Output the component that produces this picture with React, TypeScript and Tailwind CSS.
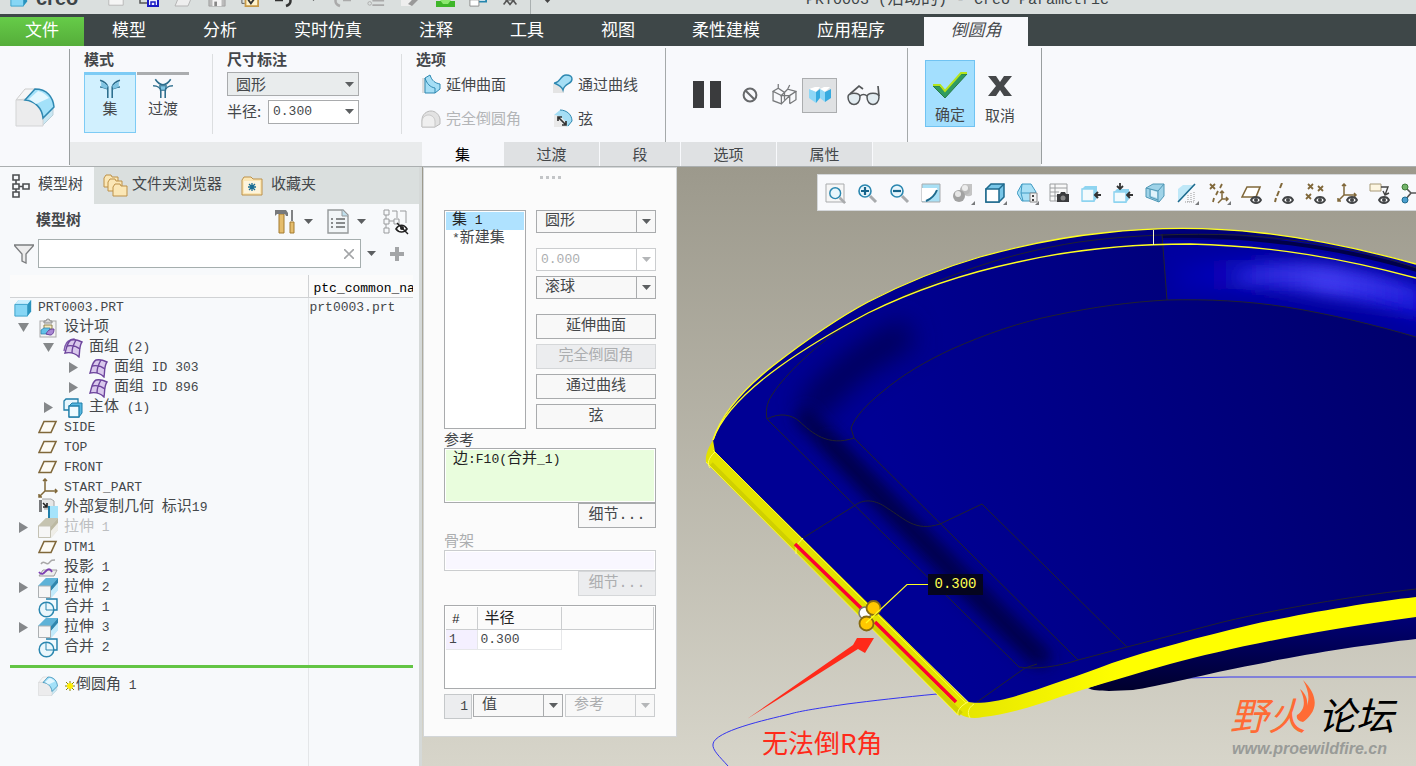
import { useState } from "react";
import type { ReactNode } from "react";
import clsx from "clsx";

interface IconProps {
  children: ReactNode;
  size?: number;
  box?: string;
}

const Icon = ({ children, size = 20, box = "0 0 20 20" }: IconProps) => (
  <svg width={size} height={size} viewBox={box} fill="none" className="shrink-0" aria-hidden="true">
    {children}
  </svg>
);

// Latin runs are set a little smaller than the Chinese around them so both keep the same rhythm
const Txt = ({ children, latin = "text-[13px]" }: { children: string; latin?: string }) => (
  <span className="whitespace-pre">
    {children.split(/([\x20-\x7e]+)/).map((part, i) =>
      i % 2 ? (
        <span key={i} className={latin}>{part}</span>
      ) : (
        part
      )
    )}
  </span>
);

const Caret = ({ className = "text-[#5c5f61]" }: { className?: string }) => (
  <svg width="9" height="5" viewBox="0 0 9 5" className={clsx("shrink-0", className)} aria-hidden="true">
    <path d="M0 0h9L4.500 5z" fill="currentColor" />
  </svg>
);

interface PickerProps {
  label: string;
  options: string[];
  className: string;
  split?: boolean;
  disabled?: boolean;
}

const Picker = ({ label, options, className, split, disabled }: PickerProps) => (
  <div className={clsx("relative", className)}>
    <select
      aria-label={label}
      disabled={disabled}
      className={clsx(
        "h-full w-full appearance-none border bg-transparent pr-5 opacity-100 outline-none",
        disabled ? "border-[#cbcdcf] text-[#acaeb0]" : "border-[#a9abad] text-[#44474a]",
        /^\d/.test(options[0]) ? "pl-1 font-['Liberation_Mono'] text-[13px]" : "pl-2 text-[15px] leading-5"
      )}
    >
      {options.map((o) => (
        <option key={o}>{o}</option>
      ))}
    </select>
    <span
      className={clsx(
        "pointer-events-none absolute inset-y-0 right-0 flex w-[20px] items-center justify-center",
        split && (disabled ? "border-l border-[#cbcdcf]" : "border-l border-[#a9abad]")
      )}
    >
      <Caret className={disabled ? "text-[#b4b6b8]" : "text-[#5c5f61]"} />
    </span>
  </div>
);

/* ---------- icons ---------- */

const CubeIcon = () => (
  <Icon size={18}>
    <path d="M1 6l4-5h14v13l-4 5H1z" fill="#5cc2e8" />
    <path d="M1 6l4-5h14l-4 5z" fill="#c9efff" />
    <path d="M15 6l4-5v13l-4 5z" fill="#2b93bd" />
    <path d="M1 6h14v13H1z" fill="#86d6f5" stroke="#3a9fc8" />
  </Icon>
);

const DesignIcon = () => (
  <Icon>
    <rect x="2" y="3" width="16" height="16" fill="#f3f3f3" stroke="#a9a9a9" />
    <path d="M6 5V3h2a2 2 0 0 1 4 0h2v2z" fill="#d8d8d8" stroke="#8c8c8c" />
    <path d="M6 7h8v4H6z" fill="#f5e9bd" stroke="#8f8353" />
    <path d="M3 12l3-2h6l-2 6H3z" fill="#62c1e8" stroke="#2a7fa8" strokeWidth=".7" />
    <path d="M8 16c2-4 4-5 8-5 0 3-1 6-4 6z" fill="#a988d3" stroke="#67409b" />
  </Icon>
);

const QuiltIcon = ({ double }: { double?: boolean }) => (
  <Icon>
    {double && <path d="M1 13C2 6 4 2 11 1l3 2" stroke="#7f5aae" strokeWidth="1.4" />}
    <path d="M2 15C4 9 4 4 8 2c4-1 7 0 11 2-3 4-2 9-3 15-4-4-9-5-14-4z" fill="#d9c8ec" stroke="#6d459d" strokeWidth="1.4" />
    <path d="M4 8c5-1 9 0 13 3M13 2c-3 5-4 9-4 13" stroke="#6d459d" strokeWidth="1.4" />
  </Icon>
);

const BodyIcon = () => (
  <Icon>
    <path d="M1 3l2-2h12v11H1z" fill="#e6f6fd" stroke="#1f7ea9" strokeWidth="1.3" />
    <path d="M6 8l3-3h10v10l-3 4H6z" fill="#57b9e2" stroke="#1f7ea9" />
    <path d="M6 8h10v11H6z" fill="#eefaff" stroke="#1f7ea9" strokeWidth="1.3" />
  </Icon>
);

const PlaneIcon = () => (
  <Icon>
    <path d="M1 14.500 6 3.500h12l-5 11z" stroke="#80683a" strokeWidth="1.600" fill="#fdfbf4" />
  </Icon>
);

const CsysIcon = () => (
  <Icon>
    <path d="M7 1v12h12M7 13l-6 6M5 3l2-2 2 2M17 11l2 2-2 2M1 16v3h3" stroke="#80683a" strokeWidth="1.500" />
  </Icon>
);

const CopyGeomIcon = () => (
  <Icon>
    <path d="M1 2h3v12H1z" fill="#77797b" />
    <path d="M4 1h9l3 2v8H6" fill="#e7e7e7" stroke="#a2a2a2" />
    <path d="M5 5l4 4M9 5v4H5" stroke="#222" strokeWidth="1.600" />
    <path d="M10 8h10v12H10z" fill="#a5e3fb" />
    <path d="M10 8h2v12h-2z" fill="#1f7ea9" />
  </Icon>
);

const ExtrudeIcon = ({ muted }: { muted?: boolean }) => (
  <Icon>
    <path d="M0 8l8-8h12v12l-7 8H0z" fill={muted ? "#deddd0" : "#a6def5"} />
    <path d="M0 8l8-8h12l-7 8z" fill={muted ? "#c6c4b1" : "#5fb3d8"} />
    <path d="M13 8l7-8v5l-7 8z" fill={muted ? "#bcb9a2" : "#2f86ae"} />
    <path d="M13 20l7-8V5l-7 8z" fill={muted ? "#efeee8" : "#c3ebfb"} />
    <path d="M0.500 8h12v11.500h-12z" fill="#f6f6f6" stroke={muted ? "#c4c2b4" : "#adb0b2"} />
  </Icon>
);

const ProjectIcon = () => (
  <Icon>
    <path d="M3 6c3-5 5 2 8-1s2-3 6-3" stroke="#a8a8a8" strokeWidth="1.500" />
    <path d="M1 18l4-6h14l-3 6z" fill="#ececec" stroke="#9b9b9b" />
    <path d="M1 14c3 4 5 1 7-1s4-3 6 1" stroke="#7d3fb2" strokeWidth="1.800" />
  </Icon>
);

const MergeIcon = () => (
  <Icon>
    <path d="M8 1h11v11h-3" stroke="#1f7ea9" strokeWidth="1.400" fill="#eff9fd" />
    <circle cx="8.500" cy="11.500" r="7.300" fill="#e6f6fd" fillOpacity=".8" stroke="#2b87b0" strokeWidth="1.500" />
    <path d="M8 4v8h8" stroke="#2b87b0" />
  </Icon>
);

const RoundIcon = ({ size = 20 }: { size?: number }) => (
  <Icon size={size} box="0 0 40 40">
    <path d="M1 13 10 2h10l-9 10z" fill="#f6f6f6" stroke="#cdcdcd" />
    <path d="M28 31l10-10v7L27 39z" fill="#c9e7f3" stroke="#b9cfd8" />
    <path d="M1 13h10c10 1 16 8 17 18v8H1z" fill="#ececed" stroke="#d3d4d5" />
    <path d="M10 13 20 2c12 0 18 8 19 18L28 31c-1-10-8-17-18-18z" fill="#a3e1f9" stroke="#2f88b1" strokeWidth="1.500" />
    <path d="M14 12 23 4c5 1 8 4 11 7L21 17z" fill="#e3f7ff" />
  </Icon>
);

const treeIcons: Record<string, ReactNode> = {
  cube: <CubeIcon />,
  design: <DesignIcon />,
  quilts: <QuiltIcon double />,
  quilt: <QuiltIcon />,
  body: <BodyIcon />,
  plane: <PlaneIcon />,
  csys: <CsysIcon />,
  copy: <CopyGeomIcon />,
  extrude: <ExtrudeIcon />,
  extrudeMuted: <ExtrudeIcon muted />,
  project: <ProjectIcon />,
  merge: <MergeIcon />,
};

interface TreeNode {
  name: string;
  icon: string;
  level: number;
  arrow?: "open" | "closed";
  common?: string;
  muted?: boolean;
}

const TREE: TreeNode[] = [
  { name: "PRT0003.PRT", icon: "cube", level: 0, common: "prt0003.prt" },
  { name: "设计项", icon: "design", level: 1, arrow: "open" },
  { name: "面组 (2)", icon: "quilts", level: 2, arrow: "open" },
  { name: "面组 ID 303", icon: "quilt", level: 3, arrow: "closed" },
  { name: "面组 ID 896", icon: "quilt", level: 3, arrow: "closed" },
  { name: "主体 (1)", icon: "body", level: 2, arrow: "closed" },
  { name: "SIDE", icon: "plane", level: 1 },
  { name: "TOP", icon: "plane", level: 1 },
  { name: "FRONT", icon: "plane", level: 1 },
  { name: "START_PART", icon: "csys", level: 1 },
  { name: "外部复制几何 标识19", icon: "copy", level: 1 },
  { name: "拉伸 1", icon: "extrudeMuted", level: 1, arrow: "closed", muted: true },
  { name: "DTM1", icon: "plane", level: 1 },
  { name: "投影 1", icon: "project", level: 1 },
  { name: "拉伸 2", icon: "extrude", level: 1, arrow: "closed" },
  { name: "合并 1", icon: "merge", level: 1 },
  { name: "拉伸 3", icon: "extrude", level: 1, arrow: "closed" },
  { name: "合并 2", icon: "merge", level: 1 },
];

const INDENT = ["pl-1", "pl-[3px]", "pl-[28px]", "pl-[53px]"];

const MENUS = ["模型", "分析", "实时仿真", "注释", "工具", "视图", "柔性建模", "应用程序"];

/* ---------- header ---------- */

const TitleBar = () => (
  <header className="flex h-[14px] items-end overflow-hidden bg-[#dadfde] text-[#3d4447]">
    <div className="flex h-7 w-full shrink-0 items-center">
      <div className="flex w-[108px] items-center gap-2 pb-1 pl-2.5">
        <CubeIcon />
        <span className="font-['Liberation_Sans'] text-[20px] leading-5 font-bold">creo</span>
      </div>
      <div className="flex w-[422px] items-center justify-between pr-3 pb-1">
        <Icon size={16}><path d="M1 1h18v18H1z" fill="#f5f5f5" stroke="#b0b0b0" /></Icon>
        <Icon size={20}><path d="M1 1h18v12M1 1v14h8" stroke="#555" strokeWidth="1.500" /><path d="M9 10h10v8H9z" fill="#eef" stroke="#1a1ac4" strokeWidth="2" /><path d="M12 18v-4h4v4" stroke="#1a1ac4" strokeWidth="1.500" /></Icon>
        <Icon size={20}><path d="M1 18 6 6h13l-5 12z" fill="#eee" stroke="#b5b5b5" /></Icon>
        <Icon size={18}><path d="M1 1h18v18H1z" fill="#bbb" stroke="#a0a0a0" /><path d="M5 12h10v7H5z" fill="#f4f4f4" /><path d="M7 14h3v5H7z" fill="#888" /></Icon>
        <Icon size={18}><path d="M5 5h14v14H5z" fill="#fff3cc" stroke="#c79a49" strokeWidth="2" /><path d="M8 12l3 4 6-8" stroke="#333" strokeWidth="2" /><path d="M1 10v6h3" stroke="#555" /></Icon>
        <Icon size={20}><path d="M1 12h8M1 12l6-6M12 18c6-2 6-8 0-10" stroke="#333" strokeWidth="2.500" /></Icon>
        <Caret className="text-[#555]" />
        <Icon size={20}><path d="M19 12h-8M8 18c-6-2-6-8 0-10" stroke="#aaa" strokeWidth="2.500" /></Icon>
        <Icon size={18}><path d="M6 8h13M6 13h13M6 18h13" stroke="#aaa" strokeWidth="2" /><circle cx="3" cy="16" r="2" stroke="#aaa" /></Icon>
        <Icon size={20}><path d="M1 8h10v10H1z" fill="#eee" /><path d="M8 16 18 6l2 4-8 8z" fill="#999" /></Icon>
        <Icon size={20}><path d="M9 1v14h3V1z" fill="#444" /><path d="M1 13h19v6H1z" fill="#3fb62a" /><path d="M5 12h11l-3 4H8z" fill="#8ce870" /></Icon>
        <Icon size={18}><path d="M8 1h11v13H8z" fill="#fff" stroke="#2585ad" strokeWidth="2" /><path d="M1 12h10v7H1z" fill="#fff" stroke="#888" /></Icon>
        <Icon size={16}><path d="M2 18l4-5 4 5 4-5 4 5M4 12h12" stroke="#555" strokeWidth="2" /></Icon>
      </div>
      <span className="h-full w-px bg-[#aab0b0]" />
      <span className="pl-3"><Caret className="text-[#444]" /></span>
      <h1 className="ml-[254px] text-[17px] leading-6"><Txt latin="text-[15px]">PRT0003 (活动的) - Creo Parametric</Txt></h1>
    </div>
  </header>
);

const MenuBar = () => (
  <nav className="flex h-8 items-end bg-[#3e4748] text-[17px] leading-7 text-white">
    <button className="h-[29px] w-[84px] bg-linear-to-b from-[#66cc48] to-[#55ad3a] pt-px">文件</button>
    <div className="flex gap-px">
      {MENUS.map((m) => (
        <button key={m} className="h-[29px] px-7 pt-px">{m}</button>
      ))}
    </div>
    <button className="ml-[11px] h-[29px] w-[104px] bg-[#f8f9fc] pt-px text-[#4a4d50] italic">倒圆角</button>
  </nav>
);

const OptionButton = ({ label, icon, disabled }: { label: string; icon: ReactNode; disabled?: boolean }) => (
  <button disabled={disabled} className={clsx("flex h-6 items-center gap-[5px] text-left", disabled && "text-[#b3b5b7]")}>
    {icon}
    {label}
  </button>
);

const RibbonTab = ({ label, width, active }: { label: string; width: string; active?: boolean }) => (
  <button
    role="tab"
    aria-selected={!!active}
    className={clsx(
      "h-6 border-r border-[#f8f9fc]",
      width,
      active ? "bg-[#f8f9fc] text-black" : "bg-[#dfe1e3]"
    )}
  >
    {label}
  </button>
);

const Ribbon = () => (
  <section className="flex h-[121px] border-b border-[#abafb0] bg-[#f8f9fc] font-['Noto_Sans_CJK_SC',sans-serif]">
    <div className="flex w-[70px] shrink-0 items-center justify-center pt-px">
      <div className="flex h-[116px] w-full items-center justify-center border-r border-[#9a9fa0]">
        <RoundIcon size={40} />
      </div>
    </div>
    <div className="flex w-[971px] shrink-0 flex-col">
      <div className="flex h-24">
        <div className="w-[142px] pt-1 pl-3.5">
          <h2 className="leading-[18px] font-bold">模式</h2>
          <div className="mt-1 flex gap-px">
            <button className="flex h-[61px] w-[52px] flex-col items-center border border-t-3 border-[#7dcbf5] bg-[#d1f0fe] pt-0.5 leading-[18px]">
              <Icon size={22}>
                <path d="M1 3c3 1 6 2 7 6v10M19 3c-3 1-6 2-7 6v10M1 9c3 0 4 1 7 2M19 9c-3 0-4 1-7 2" stroke="#2b6c8c" strokeWidth="1.400" />
                <path d="M2 4l6 4-1 3-5-2zM18 4l-6 4 1 3 5-2z" fill="#7fc4e2" />
              </Icon>
              集
            </button>
            <button className="flex h-[61px] w-[52px] flex-col items-center border-t-3 border-[#abadaf] pt-0.5 leading-[18px]">
              <Icon size={22}>
                <path d="M3 2c2 3 5 5 7 5s5-2 7-5M1 8c4 0 7 2 7 5v6M19 8c-4 0-7 2-7 5v6" stroke="#2b6c8c" strokeWidth="1.400" />
                <path d="M7 8h6l-1 4H8z" fill="#7fc4e2" stroke="#2b6c8c" />
              </Icon>
              过渡
            </button>
          </div>
        </div>
        <div className="mt-2 flex h-20 w-[190px] flex-col border-x border-[#dcdee0] pl-3.5">
          <h2 className="-mt-1 leading-[18px] font-bold">尺寸标注</h2>
          <Picker label="尺寸标注" options={["圆形", "圆锥", "C2 连续"]} className="mt-1 h-6 w-[132px] bg-[#e9eced]" />
          <div className="mt-[3px] flex w-[132px] items-center justify-between">
            <span>半径:</span>
            <Picker label="半径" options={["0.300"]} className="h-6 w-[91px] bg-white" />
          </div>
        </div>
        <div className="mt-0.5 w-[264px] border-r border-[#a5a9aa] pt-0.5 pl-3.5">
          <h2 className="leading-[18px] font-bold">选项</h2>
          <div className="mt-1 grid grid-cols-[132px_1fr] gap-y-[10px] pl-[5px]">
            <OptionButton
              label="延伸曲面"
              icon={<Icon><path d="M1 4h5v15H1z" fill="#ddd" /><path d="M4 4l5-3c2 6 5 8 10 9v5l-5 4H4z" fill="#a5def5" stroke="#2e88b1" /><path d="M4 4c2 6 5 9 10 10v5" stroke="#2e88b1" /></Icon>}
            />
            <OptionButton
              label="通过曲线"
              icon={<Icon><path d="M0 10l11 1v8H0z" fill="#e4e4e4" /><path d="M1 9c6 1 6-8 12-8 3 0 6 1 6 4 0 6-7 3-9 11-1-3-4-5-9-7z" fill="#a5def5" stroke="#2e88b1" strokeWidth="1.400" /></Icon>}
            />
            <OptionButton
              label="完全倒圆角"
              disabled
              icon={<Icon><path d="M1 19v-7c0-6 5-9 9-9s8 3 9 8v5l-5 3z" fill="#e2e2e2" stroke="#b9b9b9" /><path d="M1 19v-6c1-8 12-8 13 0v6z" fill="#efefef" stroke="#c6c6c6" /></Icon>}
            />
            <OptionButton
              label="弦"
              icon={<Icon><path d="M1 7 7 2c7 0 12 5 12 11l-5 6H1z" fill="#a5def5" /><path d="M7 2c7 0 12 5 12 11l-4 5" stroke="#2e88b1" /><path d="M1 7c7 0 12 5 13 12H1z" fill="#e9e9e9" /><path d="M5 9l8 8M5 13V9h4M13 13v4H9" stroke="#333" strokeWidth="1.700" /></Icon>}
            />
          </div>
        </div>
        <div className="mt-0.5 flex w-[242px] items-center border-r border-[#a5a9aa] pl-[26px]">
          <button aria-label="暂停">
            <Icon size={30} box="0 0 30 30"><path d="M1 1h11v27H1zM18 1h11v27H18z" fill="#3a3b3d" /></Icon>
          </button>
          <button aria-label="无预览" className="ml-5">
            <Icon size={16}><circle cx="10" cy="10" r="8" stroke="#67696b" strokeWidth="2.500" /><path d="M4 4l12 12" stroke="#67696b" strokeWidth="2.500" /></Icon>
          </button>
          <button aria-label="分离" className="ml-3.5">
            <Icon size={25} box="0 0 24 24">
              <path d="M1 8l5-3 6 4-3 3zM1 8v9l8 3v-8M9 12l6-6 8 2-6 4zM9 20l8-8v8M23 8v8l-6 4M12 9v7M6 5V1M15 6l2-4" stroke="#77797b" strokeWidth="1.200" />
            </Icon>
          </button>
          <button aria-label="连接" className="ml-[5px] flex size-[35px] items-center justify-center border border-[#abadaf] bg-[#dfe1e3]">
            <Icon size={24} box="0 0 24 24">
              <path d="M1 6l6-2h5l-4 5zM12 6l4-2h6l-5 5z" fill="#fff" />
              <path d="M1 6l7 3v11l-7-5z" fill="#8ed7f6" />
              <path d="M8 9l4-3v9l-4 5z" fill="#37abdf" />
              <path d="M12 6l5 3v10l-5-4z" fill="#8ed7f6" />
              <path d="M17 9l6-3v9l-6 4z" fill="#37abdf" />
            </Icon>
          </button>
          <button aria-label="预览" className="ml-2.5">
            <svg width="34" height="22" viewBox="0 0 34 22" fill="none" aria-hidden="true">
              <path d="M1 13c0-5 12-5 12 0 0 10-12 10-12 0zM20 13c0-5 12-5 12 0 0 10-12 10-12 0z" fill="#e2ecf1" stroke="#55585a" strokeWidth="1.500" />
              <path d="M13 12c2-2 5-2 7 0M3 10l9-8 4 3M32 12 31 2" stroke="#55585a" strokeWidth="1.700" />
            </svg>
          </button>
        </div>
        <div className="flex gap-1.5 pt-3.5 pl-[17px]">
          <button className="flex h-[67px] w-[50px] flex-col items-center justify-between border border-[#70c3f2] bg-[#a3dffe] pt-2.5">
            <svg width="36" height="28" viewBox="0 0 36 28" aria-hidden="true">
              <path d="M1 15h6l6 6L29 3h6L13 27z" fill="#2f9b62" stroke="#277b45" />
              <path d="M1 14h7l5 6L29 2h6" fill="none" stroke="#b5e51c" strokeWidth="2" />
            </svg>
            <span className="leading-6">确定</span>
          </button>
          <button className="flex h-[67px] w-[38px] flex-col items-center justify-between pt-4">
            <svg width="26" height="20" viewBox="0 0 26 20" aria-hidden="true">
              <path d="M1 0h8l4 6 4-6h8l-8 10 8 10h-8l-4-6-4 6H1l8-10z" fill="#46484a" />
            </svg>
            <span className="leading-6">取消</span>
          </button>
        </div>
      </div>
      <div role="tablist" className="flex h-6 bg-[#e9ebec] pl-[352px] leading-6">
        <RibbonTab label="集" width="w-[82px]" active />
        <RibbonTab label="过渡" width="w-[96px]" />
        <RibbonTab label="段" width="w-[81px]" />
        <RibbonTab label="选项" width="w-[96px]" />
        <RibbonTab label="属性" width="w-[96px]" />
      </div>
    </div>
    <div className="my-0.5 border-l border-[#9a9fa0]" />
  </section>
);

/* ---------- model tree ---------- */

const FolderShape = ({ x, y }: { x: number; y: number }) => (
  <path d={`M${x} ${y + 3}l2-3h5l1 2h6v10H${x}z`} fill="#fbe7b6" stroke="#bd9148" />
);

const TreePanel = () => {
  const [query, setQuery] = useState("");

  return (
    <aside className="flex w-[422px] shrink-0 flex-col border-r-3 border-[#d5d9d8] bg-[#f7f9fb]">
      <div role="tablist" className="flex h-[37px] shrink-0 bg-[#dadfde]">
        <button role="tab" aria-selected="true" className="flex w-[94px] items-center gap-2 bg-[#f7f9fb] pl-3">
          <svg width="18" height="24" viewBox="0 0 18 24" fill="none" className="shrink-0" aria-hidden="true">
            <path d="M1 1h6v5H1zM1 10h6v5H1zM1 18h6v5H1zM11 10h6v5h-6zM4 6v4M4 15v3M7 12.500h4" stroke="#4b4e50" strokeWidth="1.600" />
          </svg>
          模型树
        </button>
        <button role="tab" aria-selected="false" className="flex items-center gap-1 pl-[9px]">
          <Icon size={25} box="0 0 25 25"><FolderShape x={1} y={2} /><FolderShape x={5} y={6} /><FolderShape x={10} y={11} /></Icon>
          文件夹浏览器
        </button>
        <button role="tab" aria-selected="false" className="flex items-center gap-2 pl-[19px]">
          <Icon size={22} box="0 0 22 20">
            <path d="M1 4l2-3h7l2 2h9v16H1z" fill="#fbe7b6" stroke="#bd9148" />
            <path d="M3 5h16v12H3z" fill="#fdf4dc" />
            <path d="M11 7v8M7 11h8M8 8l6 6M14 8l-6 6" stroke="#1a6d94" strokeWidth="1.300" />
          </Icon>
          收藏夹
        </button>
      </div>

      <div className="flex h-[35px] shrink-0 items-center pl-9">
        <h2 className="w-[238px] font-bold">模型树</h2>
        <button aria-label="设置" className="flex w-[53px] items-center gap-2">
          <svg width="22" height="25" viewBox="0 0 22 25" fill="none" aria-hidden="true">
            <path d="M5 5h5v19H5z" fill="#e5bd6d" stroke="#a27a31" />
            <path d="M1 1h11l2 3v3h-2l-1-2H3L1 7z" fill="#77797b" />
            <path d="M18 1v11" stroke="#808284" strokeWidth="2" />
            <path d="M16 13h4v11h-4z" fill="#e5bd6d" stroke="#a27a31" />
          </svg>
          <Caret />
        </button>
        <button aria-label="显示" className="flex w-14 items-center gap-2">
          <svg width="22" height="25" viewBox="0 0 22 25" fill="none" aria-hidden="true">
            <path d="M1 1h15l5 5v18H1z" fill="#f1f5f7" stroke="#95999b" strokeWidth="1.400" />
            <path d="M15 1v6h6" fill="#bfe0ee" stroke="#95999b" />
            <path d="M9 10h9M9 14h9M9 18h9M4 10h2M4 14h2M4 18h2" stroke="#65686a" strokeWidth="1.400" />
          </svg>
          <Caret />
        </button>
        <button aria-label="树列">
          <Icon size={26} box="0 0 26 26">
            <path d="M1 1h5v5H1zM1 10h5v5H1zM1 19h5v5H1zM11 10h5v5h-5zM3 6v4M3 15v4M6 12h5M9 2h5v7M17 2h6v12" stroke="#999b9d" />
            <path d="M13 20c3-5 8-5 11 0-3 4-8 4-11 0z" fill="#fff" stroke="#222" strokeWidth="1.600" />
            <circle cx="19" cy="19" r="2" fill="#222" />
            <path d="M14 14l11 11" stroke="#222" strokeWidth="1.400" />
          </Icon>
        </button>
      </div>

      <div className="flex h-[29px] shrink-0 items-center pl-3.5">
        <Icon size={20}><path d="M0 1h20l-8 9v9l-4-2v-7z" fill="#ececec" stroke="#7b7d7f" strokeWidth="1.300" /></Icon>
        <div className="relative ml-1 h-[29px] w-[323px]">
          <input
            aria-label="过滤模型树"
            value={query}
            onChange={(e) => setQuery(e.target.value)}
            className="h-full w-full border border-[#a5aeae] bg-white pr-6 pl-2 outline-none"
          />
          <button aria-label="清除" onClick={() => setQuery("")} className="absolute inset-y-0 right-0 flex w-6 items-center justify-center">
            <Icon size={10} box="0 0 10 10"><path d="M0 0l10 10M10 0 0 10" stroke="#a3a5a7" strokeWidth="1.600" /></Icon>
          </button>
        </div>
        <button aria-label="过滤选项" className="ml-1.5"><Caret /></button>
        <button aria-label="添加" className="ml-3.5">
          <Icon size={14} box="0 0 14 14"><path d="M7 0v14M0 7h14" stroke="#a3a5a7" strokeWidth="4" /></Icon>
        </button>
      </div>

      <div className="flex grow flex-col pt-[7px] pr-1.5 pl-2.5">
        <table className="w-full table-fixed border-collapse text-left">
          <colgroup>
            <col className="w-[298px]" />
            <col />
          </colgroup>
          <thead>
            <tr className="h-[22px] border-b border-[#d0d2d4] bg-[#fbfbfb] text-black">
              <th className="border-r border-[#d0d2d4]"></th>
              <th className="overflow-hidden p-0 pt-1.5 pl-[5px] text-[13px] leading-[15px] font-normal whitespace-nowrap">ptc_common_name</th>
            </tr>
          </thead>
          <tbody>
            {TREE.map((node, i) => (
              <tr key={i} className="h-5">
                <td className="border-r border-[#e4e6e8] p-0">
                  <div className={clsx("flex h-5 items-center", INDENT[node.level], node.muted && "text-[#bdbfc1]")}>
                    {node.level > 0 && (
                      <span className="flex w-[25px] shrink-0 pl-[5px]">
                        {node.arrow && (
                          <Icon size={11} box="0 0 11 11">
                            <path d={node.arrow === "open" ? "M0 1h11L5.500 10z" : "M1 0v11l9-5.500z"} fill="#85888a" />
                          </Icon>
                        )}
                      </span>
                    )}
                    <span className="mr-1.5 flex">{treeIcons[node.icon]}</span>
                    <Txt>{node.name}</Txt>
                  </div>
                </td>
                <td className="p-0 pl-px leading-5">{node.common && <Txt>{node.common}</Txt>}</td>
              </tr>
            ))}
          </tbody>
        </table>
        <div className="h-[7px] w-[299px] shrink-0 border-r border-[#e4e6e8]" />
        <div className="h-[3px] shrink-0 bg-[#63c544]" />
        <div className="flex grow">
          <div className="flex w-[299px] items-start border-r border-[#e4e6e8] pt-2 pl-7">
            <RoundIcon />
            <span className="ml-1.5 flex h-5 items-center">
              <Icon size={12} box="0 0 12 12">
                <path d="M6 1v10M1 6h10M2 2l8 8M10 2l-8 8" stroke="#8a8600" />
                <circle cx="6" cy="6" r="3" fill="#ffee00" />
              </Icon>
              <Txt>倒圆角 1</Txt>
            </span>
          </div>
        </div>
      </div>
    </aside>
  );
};

/* ---------- sets dialog ---------- */

const DialogButton = ({ label, disabled, className = "" }: { label: string; disabled?: boolean; className?: string }) => (
  <button
    disabled={disabled}
    className={clsx(
      "h-[25px] border pt-px leading-[22px]",
      disabled ? "border-[#d5d7d9] bg-[#ecedef] text-[#acaeb0]" : "border-[#a9abad] bg-[#f8f8f8]",
      className
    )}
  >
    {label}
  </button>
);

const SetsDialog = () => (
  <section className="relative ml-px h-[570px] w-[254px] shrink-0 border border-[#d3d6d8] bg-[#fbfbfb] px-5">
    <div className="flex h-[42px] justify-center gap-[3px] pt-2">
      {[0, 1, 2, 3].map((i) => (
        <span key={i} className="size-[3px] bg-[#c3c5c7]" />
      ))}
    </div>
    <div className="flex gap-2.5">
      <ul className="h-[219px] w-[82px] border border-[#a9abad] bg-white p-px leading-[18px]">
        <li className="h-[18px] bg-[#afe2ff] pl-1.5 text-[#222]"><Txt>集 1</Txt></li>
        <li className="h-[18px] pl-1.5"><Txt>*新建集</Txt></li>
      </ul>
      <div className="flex w-[120px] flex-col">
        <Picker label="截面形状" options={["圆形", "圆锥"]} split className="h-[23px] bg-[#f8f8f8]" />
        <Picker label="圆锥参数" options={["0.000"]} split disabled className="mt-[15px] h-[23px] bg-white" />
        <Picker label="创建方法" options={["滚球", "垂直于骨架"]} split className="mt-[5px] h-[23px] bg-[#f8f8f8]" />
        <div className="mt-[15px] flex flex-col gap-[5px]">
          <DialogButton label="延伸曲面" />
          <DialogButton label="完全倒圆角" disabled />
          <DialogButton label="通过曲线" />
          <DialogButton label="弦" />
        </div>
      </div>
    </div>
    <h3 className="mt-px h-[18px] leading-[23px]">参考</h3>
    <div className="h-[55px] border border-[#a9abad] bg-[#e9fddd] pl-2 leading-[22px] text-[#222] inset-ring inset-ring-white"><Txt>边:F10(合并_1)</Txt></div>
    <div className="flex justify-end">
      <DialogButton label="细节..." className="w-[78px]" />
    </div>
    <h3 className="mt-1 h-[18px] leading-[22px] text-[#acaeb0]">骨架</h3>
    <div className="h-[21px] border border-[#cbcdcf] bg-[#f9f7ff] inset-ring inset-ring-white" />
    <div className="flex justify-end">
      <DialogButton label="细节..." disabled className="w-[78px]" />
    </div>
    <div className="mt-[9px] h-[84px] border border-[#a9abad] bg-white p-px">
      <table className="w-full table-fixed border-collapse text-left">
        <colgroup>
          <col className="w-[31px]" />
          <col className="w-[84px]" />
          <col />
        </colgroup>
        <thead>
          <tr className="h-[22px] border-b border-[#cbcdcf] bg-[#fbfbfb] text-[#222]">
            <th className="border-r border-[#cbcdcf] p-0 pt-1 pl-1.5 text-[13px] leading-[17px] font-normal">#</th>
            <th className="border-r border-[#cbcdcf] p-0 pt-1 pl-[7px] leading-[17px] font-normal">半径</th>
            <th className="border-r border-[#cbcdcf] p-0"></th>
          </tr>
        </thead>
        <tbody>
          <tr className="h-5 text-[13px]">
            <td className="border-r border-b border-[#e6e7e9] bg-[#f4f0ff] p-0 pl-[3px] leading-[19px]">1</td>
            <td className="border-r border-b border-[#e6e7e9] p-0 pl-[3px] leading-[19px]">0.300</td>
            <td></td>
          </tr>
        </tbody>
      </table>
    </div>
    <div className="mt-[5px] flex items-start">
      <output className="h-[25px] w-[28px] border border-[#c5c8ca] bg-[#ecedef] pr-[3px] text-right text-[13px] leading-6">1</output>
      <Picker label="半径类型" options={["值", "参考"]} split className="ml-px h-[23px] w-[90px] bg-[#f8f8f8]" />
      <Picker label="半径参考" options={["参考"]} split disabled className="ml-0.5 h-[23px] w-[90px] bg-[#f8f8f8]" />
    </div>
  </section>
);

/* ---------- graphics area ---------- */

const BROWN = "#80683a";
const Eye = () => (
  <>
    <path d="M10 17c2-4 8-4 10 0-2 4-8 4-10 0z" fill="#fff" stroke="#434547" strokeWidth="1.800" />
    <circle cx="15" cy="17" r="2" fill="#434547" />
  </>
);
const Corner = () => <path d="M22 18v4h-4z" fill="#77797b" />;
const Lens = ({ mark }: { mark?: string }) => (
  <>
    <path d="M13 13l6 6" stroke="#a9abad" strokeWidth="3" />
    <circle cx="8" cy="8" r="6" fill="#e8f6fc" stroke="#2b87b0" strokeWidth="1.600" />
    {mark && <path d={mark} stroke="#17658c" strokeWidth="2.200" />}
  </>
);

const VIEW_TOOLS: { name: string; art: ReactNode }[] = [
  { name: "重新调整", art: <><path d="M1 1h18v18H1z" fill="#f6f6f6" stroke="#a9abad" /><g transform="translate(3 3) scale(.9)"><Lens /></g></> },
  { name: "放大", art: <Lens mark="M8 4v8M4 8h8" /> },
  { name: "缩小", art: <Lens mark="M4 8h8" /> },
  { name: "重画", art: <><path d="M1 1h18v18H1z" fill="#a9e0f5" stroke="#a9abad" /><path d="M1 5h15c1 3 0 5-3 7l-8 6H1z" fill="#fff" /><path d="M5 18c5-2 9-6 11-11" stroke="#1e6a8d" strokeWidth="2" /></> },
  { name: "渲染", art: <><path d="M10 1h9v11c-4 3-7 0-13-3z" fill="#c4c4c4" /><circle cx="12" cy="7" r="5" fill="#b9b9b9" /><circle cx="6" cy="13" r="6" fill="#a2a2a2" /><circle cx="5" cy="11" r="3" fill="#e6e6e6" /><circle cx="12" cy="5" r="3" fill="#ededed" /><Corner /></> },
  { name: "显示样式", art: <><path d="M1 6l5-5h13v13l-5 5H1z" fill="#78c6e8" stroke="#1e6a8d" strokeWidth="1.500" /><path d="M1 6h13v13H1z" fill="#fff" stroke="#1e6a8d" strokeWidth="1.500" /><path d="M14 6l5-5" stroke="#1e6a8d" strokeWidth="1.500" /><Corner /></> },
  { name: "已保存方向", art: <><path d="M5 1h9l5 8-5 9H5L0 10z" fill="#a9e0f5" stroke="#3f9ac2" /><path d="M5 1l-1 9h15M4 10l2 8" stroke="#3f9ac2" /><path d="M13 10h7v9h-7z" fill="#f2f2f2" stroke="#888" /><path d="M16 12v2M16 16v2" stroke="#444" strokeWidth="2" /><Corner /></> },
  { name: "视图管理器", art: <><path d="M1 1h17v17H1zM1 5h17M1 9h9M1 13h8M6 1v17" stroke="#9c9ea0" fill="#f9f9f9" /><path d="M8 11h3l1-2h4l1 2h3v8H8z" fill="#3a3b3d" /><circle cx="14" cy="15" r="2.500" fill="#888" /></> },
  { name: "隐藏", art: <><path d="M1 6l3-3h12v12l-3 4H1z" fill="#8fd4f0" /><path d="M1 6h12v12H1z" fill="#f2fafd" stroke="#8fd4f0" strokeWidth="1.500" /><path d="M20 12h-6M17 9l-3 3 3 3" stroke="#333" strokeWidth="2" /></> },
  { name: "截面", art: <><path d="M1 9l3-3h12v10l-3 4H1z" fill="#8fd4f0" /><path d="M1 9h12v10H1z" fill="#f2fafd" stroke="#8fd4f0" strokeWidth="1.500" /><path d="M20 12h-5M17 9l-3 3 3 3M7 0v5M4 3l3 3 3-3" stroke="#333" strokeWidth="1.800" /></> },
  { name: "透视", art: <><path d="M1 5l7-4h11v12l-5 6-13-5z" fill="#9fd3e8" stroke="#4f97b5" /><path d="M1 5l12 3v11M13 8l6-7M5 6v8l8 3" stroke="#4f97b5" /><path d="M6 7l6 2v6l-6-2z" fill="#dff3fb" /></> },
  { name: "剖面", art: <><path d="M1 6l5-4h12L4 17l-3 2z" fill="#bfe8f8" /><path d="M8 19h9V8M11 19v-8M14 19v-9" stroke="#999" strokeDasharray="1 1" /><path d="M1 19 18 1" stroke="#1e6a8d" strokeWidth="1.600" /><Corner /></> },
  { name: "基准显示", art: <><path d="M1 1l5 5M6 1 1 6M13 1l-2 4M9 8l-2 4M5 15l-1 4" stroke={BROWN} strokeWidth="1.800" /><path d="M13 8v8h6M13 16l-4 4M11 10l2-2 2 2M17 14l2 2-2 2" stroke={BROWN} strokeWidth="1.500" /><Corner /></> },
  { name: "平面显示", art: <><path d="M1 14 6 4h13l-4 10z" stroke={BROWN} strokeWidth="1.600" fill="#fff" /><Eye /></> },
  { name: "轴显示", art: <><path d="M9 0 7 5M6 8l-2 5M3 15l-1 4" stroke={BROWN} strokeWidth="2" /><Eye /></> },
  { name: "点显示", art: <><path d="M3 1l5 5M8 1 3 6M13 3l5 5M18 3l-5 5M1 11l5 5M6 11l-5 5" stroke={BROWN} strokeWidth="1.800" /><Eye /></> },
  { name: "坐标系显示", art: <><path d="M7 1v11h12M7 12l-6 6M5 3l2-2 2 2M17 10l2 2-2 2M1 15v3h3" stroke={BROWN} strokeWidth="1.500" /><Eye /></> },
  { name: "注释显示", art: <><path d="M1 1h11v7H1z" fill="#fdf6e1" stroke="#a89a78" /><path d="M12 4h7l-3 8M14 8l2 4 4-2" stroke="#444" strokeWidth="1.400" /><Eye /></> },
  { name: "旋转中心", art: <><path d="M4 4l6 6-6 7M10 10h9" stroke="#555" strokeWidth="1.600" /><circle cx="4" cy="4" r="3" fill="#72b36a" stroke="#3f7c38" /><circle cx="4" cy="17" r="3" fill="#4b9fcf" stroke="#1e6a8d" /><circle cx="18" cy="10" r="3" fill="#d8606a" /></> },
];

const OUTLINE =
  "M713 440C722 412 746 387 774 365C805 341 838 318 868 302C903 284 942 268 980 257C1020 246 1062 237 1103 233C1155 227 1210 227 1262 233C1315 239 1365 250 1416 264";
const BODY = `${OUTLINE}V607C1360 612 1300 618 1250 630C1180 648 1110 668 1060 688C1030 700 1000 708 975 708L712 452Z`;
const RIM = "M713 440C722 414 750 388 779 367C808 346 838 329 868 313C915 290 966 273 1018 262C1075 249 1130 244 1190 244C1275 246 1345 259 1416 278";
const FLOOR_EDGE = "M1416 337C1375 325 1330 314 1286 307C1248 301 1208 299 1167 300C1130 302 1093 307 1056 315C1020 322 986 334 952 349C926 361 902 375 882 392C866 405 855 417 851 428L854 438";

const Model = () => (
  <svg viewBox="422 167 994 599" preserveAspectRatio="xMinYMin slice" className="absolute inset-0 h-full w-full" fill="none" aria-hidden="true">
    <defs>
      <linearGradient id="floor" gradientUnits="userSpaceOnUse" x1="900" y1="500" x2="1416" y2="340">
        <stop offset="0" stopColor="#000094" />
        <stop offset="1" stopColor="#00006c" />
      </linearGradient>
      <linearGradient id="shine" gradientUnits="userSpaceOnUse" x1="1165" y1="0" x2="1416" y2="0">
        <stop offset="0" stopColor="#0000a4" />
        <stop offset=".3" stopColor="#0a08be" />
        <stop offset=".65" stopColor="#413cf2" />
        <stop offset="1" stopColor="#1210d4" />
      </linearGradient>
      <linearGradient id="chain" gradientUnits="userSpaceOnUse" x1="940" y1="0" x2="1120" y2="0">
        <stop offset="0" stopColor="#e2e200" />
        <stop offset="1" stopColor="#ffff00" />
      </linearGradient>
      <linearGradient id="under" x1="0" y1="0" x2="0" y2="1">
        <stop offset="0" stopColor="#000080" />
        <stop offset="1" stopColor="#00002c" />
      </linearGradient>
      <filter id="soft" filterUnits="userSpaceOnUse" x="640" y="180" width="860" height="560"><feGaussianBlur stdDeviation="8" /></filter>
      <filter id="softer" filterUnits="userSpaceOnUse" x="640" y="180" width="860" height="560"><feGaussianBlur stdDeviation="13" /></filter>
      <clipPath id="body"><path d={BODY} /></clipPath>
      <clipPath id="band"><path d="M1162 240H1430V342L1416 337C1375 325 1330 314 1286 307C1248 301 1208 299 1167 300Z" /></clipPath>
    </defs>

    <path d="M937 694C905 697 870 701 847 704C820 708 800 711 790 714C765 720 715 731 713 744C712 750 720 757 728 766M1187 678L1230 677H1416" stroke="#3434f0" />
    <path d="M1088 688C1095 692 1115 691 1133 690C1155 687 1210 673 1253 665C1300 655 1370 644 1416 639V607L1230 640Z" fill="url(#under)" />
    <path d={BODY} fill="url(#floor)" />
    <g clipPath="url(#body)">
      <g clipPath="url(#band)">
        <path d="M1162 240H1430V342L1167 300Z" fill="#0000a0" />
        <path d="M1175 279C1240 270 1330 272 1430 306" stroke="url(#shine)" strokeWidth="30" filter="url(#soft)" />
        <path d="M1240 278C1290 268 1360 278 1416 296" stroke="#3c38ea" strokeWidth="8" filter="url(#soft)" />
      </g>
      <path d="M910 332C870 350 835 378 808 412" stroke="#00005a" strokeWidth="30" filter="url(#softer)" />
      <path d="M800 412C835 450 930 555 1044 662" stroke="#000046" strokeWidth="18" filter="url(#soft)" />
      <path d="M825 435L1050 662" stroke="#00003a" strokeWidth="5" filter="url(#soft)" />
      <path d="M1162 236C1240 234 1340 246 1420 271" stroke="#000048" strokeWidth="4" />
    </g>

    {/* part edges */}
    <g stroke="#22222e">
      <path d="M1416 268C1370 251 1300 239 1239 235C1185 233 1130 235 1079 242C1040 248 1000 258 962 272C915 289 870 311 835 333C815 347 785 375 774 392C768 400 765 408 767 419" />
      <path d={FLOOR_EDGE} />
      <path d="M1162 234L1167 300M767 419L1019 667C1035 670 1060 666 1078 660L1127 647L1223 622C1290 606 1370 594 1416 589M854 438L1078 660" />
      <path d="M767 419C780 412 792 415 799 421C812 433 828 447 854 438" />
      <path d="M803 538L854 506C864 498 876 500 887 508C905 519 915 532 940 524L982 504L1127 647M977 702L1025 668L1037 664" />
    </g>

    {/* selected edge chain */}
    <path d="M713 440C708 448 705 456 706 462L960 714C965 718 975 719 983 717C1005 715 1035 706 1060 697C1100 684 1135 674 1170 664C1230 648 1300 633 1416 617V597C1370 602 1300 614 1250 625C1200 637 1150 650 1112 663C1080 675 1040 689 1013 697C995 702 978 704 968 702L715 452Z" fill="url(#chain)" />
    <path d="M711 464L961 714" stroke="#d0d000" strokeWidth="5" />
    <path d="M713 450L966 703M706 462L958 715" stroke="#ffff20" />
    <path d="M715 452C708 458 707 464 710 468M968 702C960 706 957 711 958 715M974 704C968 708 967 713 970 718M803 538L796 546V554" stroke="#ffff60" />
    <path d={OUTLINE} stroke="#ffff20" strokeWidth="1.300" />
    <path d={RIM} stroke="#ffff20" strokeWidth="1.300" />
    <path d="M1153.500 230v15" stroke="#f4f4d0" />
    <path d="M795 544L862 609M875 622L956 702" stroke="#ff0030" strokeWidth="3.500" />

    {/* radius handle */}
    <circle cx="865" cy="613" r="6" fill="#fff" stroke="#777" strokeWidth="1.500" />
    <circle cx="873.500" cy="608" r="7" fill="#ffc800" stroke="#876b10" strokeWidth="1.800" />
    <circle cx="866.500" cy="623.500" r="7" fill="#ffc800" stroke="#876b10" strokeWidth="1.800" />
    <path d="M866 623L907 584.500H929" stroke="#ffff20" strokeWidth="1.200" />

    <path d="M747 719L853 645L857 638H874L865 653L858 649Z" fill="#ff2a1a" />
  </svg>
);

const Viewport = () => (
  <main className="relative flex min-w-0 grow items-start overflow-hidden bg-linear-to-b from-[#9c998c] to-[#d7d5ca]">
    <Model />
    <span className="absolute top-[407px] left-[506px] h-[21px] w-[55px] bg-[#05051e] text-center text-[14px] leading-[21px] text-[#ffff50]">0.300</span>
    <p className="absolute top-[559px] left-[340px] font-['Noto_Sans_CJK_SC',sans-serif] text-[26px] leading-8 whitespace-nowrap text-[#ff2a1a]">无法倒R角</p>
    <div className="absolute right-[22px] bottom-2 w-[164px] whitespace-nowrap">
      <div className="flex justify-between text-[38px] leading-10 italic">
        <span className="text-[#ff6b35]">野火</span>
        <span className="text-black">论坛</span>
      </div>
      <svg width="20" height="44" viewBox="0 0 20 44" className="absolute -top-5 left-[66px]" aria-hidden="true">
        <path d="M7 0c12 12 15 24 8 34-3 4-5 6-8 8-5-1-7-3-6-7 8-5 9-14 3-26 6 5 8 11 7 17 3-9 1-17-4-26z" fill="#ff6b35" />
      </svg>
      <div className="pl-0.5 font-['Liberation_Sans'] text-[16px] leading-[18px] font-bold text-[#999b98] italic">www.proewildfire.cn</div>
    </div>
    <SetsDialog />
    <div role="toolbar" aria-label="视图" className="relative mt-[7px] ml-[140px] flex h-[37px] min-w-0 grow items-center gap-3 overflow-hidden border border-r-0 border-[#d4d7da] bg-[#f8f9fc] pt-0.5 pl-[7px]">
      {VIEW_TOOLS.map((tool) => (
        <button key={tool.name} aria-label={tool.name} className="w-5 shrink-0">
          <Icon size={22} box="0 0 22 22">{tool.art}</Icon>
        </button>
      ))}
    </div>
  </main>
);

export default function App() {
  return (
    <div className="flex h-screen flex-col overflow-hidden bg-[#f8f9fc] font-['Liberation_Mono','Noto_Sans_CJK_SC',monospace] text-[15px] leading-5 text-[#44474a]">
      <TitleBar />
      <MenuBar />
      <Ribbon />
      <div className="flex min-h-0 grow">
        <TreePanel />
        <Viewport />
      </div>
    </div>
  );
}
